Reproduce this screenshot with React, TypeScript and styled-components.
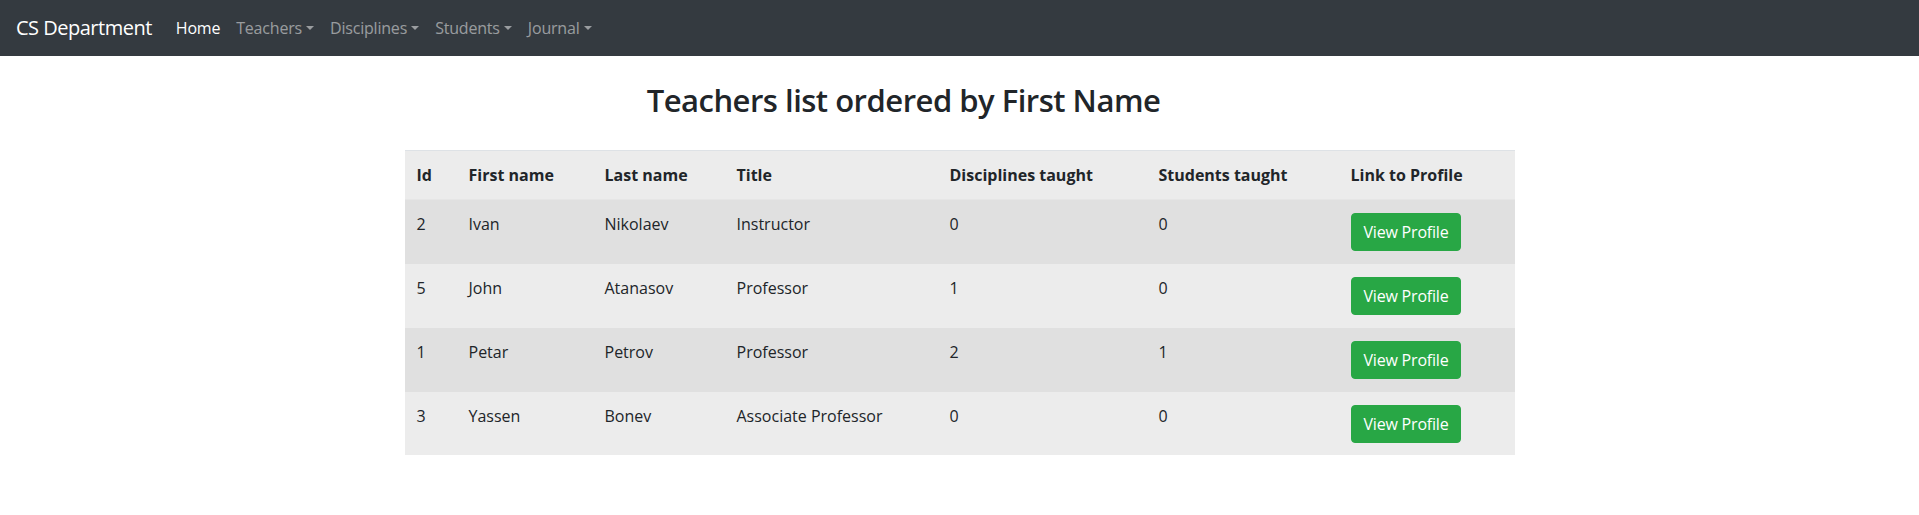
import * as React from 'react';
import styled, { createGlobalStyle } from 'styled-components';

const GlobalStyle = createGlobalStyle`
  body {
    margin: 0;
    background: #fff;
    color: #212529;
    font-family: 'Open Sans', 'Noto Sans', sans-serif;
    font-size: 16px;
    line-height: 1.5;
  }
`;

const Navbar = styled.nav`
  display: flex;
  align-items: center;
  height: 56px;
  box-sizing: border-box;
  padding: 8px 16px;
  background-color: #343a40;
`;

const Brand = styled.a`
  font-size: 20px;
  line-height: 30px;
  letter-spacing: -0.5px;
  padding: 5px 0;
  margin-right: 16px;
  color: #fff;
  white-space: nowrap;
`;

const NavList = styled.div`
  display: flex;
  align-items: center;
`;

const NavLink = styled.a<{ $active?: boolean }>`
  padding: 8px;
  line-height: 24px;
  letter-spacing: -0.2px;
  color: ${(p) => (p.$active ? '#fff' : 'rgba(255, 255, 255, 0.5)')};
  white-space: nowrap;
`;

const Caret = styled.span`
  display: inline-block;
  margin-left: 0.255em;
  vertical-align: 0.255em;
  border-top: 0.3em solid;
  border-right: 0.3em solid transparent;
  border-left: 0.3em solid transparent;
`;

const Container = styled.main`
  width: 1110px;
  margin: 0 auto;
`;

const Title = styled.h1`
  margin: 26px 0 31px;
  padding-right: 112px;
  font-size: 31px;
  font-weight: 600;
  line-height: 1.2;
  letter-spacing: -0.5px;
  text-align: center;
`;

const Table = styled.table`
  width: 100%;
  border-collapse: collapse;
  table-layout: fixed;
`;

const HeadRow = styled.tr`
  background-color: #ececec;
`;

const Th = styled.th`
  padding: 12px;
  text-align: left;
  font-weight: 700;
  border-top: 1px solid #dee2e6;
  border-bottom: 1px solid #e6e6e6;
`;

const Row = styled.tr<{ $odd: boolean }>`
  background-color: ${(p) => (p.$odd ? '#e0e0e0' : '#ececec')};
`;

const Td = styled.td`
  padding: 12px;
  vertical-align: top;
  border-top: 1px solid transparent;
`;

const Button = styled.a`
  display: inline-block;
  padding: 6px 12px;
  margin-top: 1px;
  border: 1px solid #28a745;
  border-radius: 4px;
  background-color: #28a745;
  color: #fff;
  line-height: 24px;
  letter-spacing: -0.2px;
  white-space: nowrap;
  vertical-align: top;
`;

const columns = [
  { label: 'Id', width: 52 },
  { label: 'First name', width: 136 },
  { label: 'Last name', width: 132 },
  { label: 'Title', width: 213 },
  { label: 'Disciplines taught', width: 209 },
  { label: 'Students taught', width: 192 },
  { label: 'Link to Profile', width: 176 },
];

const teachers = [
  { id: 2, first: 'Ivan', last: 'Nikolaev', title: 'Instructor', disciplines: 0, students: 0 },
  { id: 5, first: 'John', last: 'Atanasov', title: 'Professor', disciplines: 1, students: 0 },
  { id: 1, first: 'Petar', last: 'Petrov', title: 'Professor', disciplines: 2, students: 1 },
  { id: 3, first: 'Yassen', last: 'Bonev', title: 'Associate Professor', disciplines: 0, students: 0 },
];

const App: React.FC = () => (
  <>
    <GlobalStyle />
    <Navbar>
      <Brand>CS Department</Brand>
      <NavList>
        <NavLink $active>Home</NavLink>
        <NavLink>Teachers<Caret /></NavLink>
        <NavLink>Disciplines<Caret /></NavLink>
        <NavLink>Students<Caret /></NavLink>
        <NavLink>Journal<Caret /></NavLink>
      </NavList>
    </Navbar>
    <Container>
      <Title>Teachers list ordered by First Name</Title>
      <Table>
        <colgroup>
          {columns.map((c) => (
            <col key={c.label} style={{ width: c.width }} />
          ))}
        </colgroup>
        <thead>
          <HeadRow>
            {columns.map((c) => (
              <Th key={c.label}>{c.label}</Th>
            ))}
          </HeadRow>
        </thead>
        <tbody>
          {teachers.map((t, i) => (
            <Row key={t.id} $odd={i % 2 === 0}>
              <Td>{t.id}</Td>
              <Td>{t.first}</Td>
              <Td>{t.last}</Td>
              <Td>{t.title}</Td>
              <Td>{t.disciplines}</Td>
              <Td>{t.students}</Td>
              <Td>
                <Button>View Profile</Button>
              </Td>
            </Row>
          ))}
        </tbody>
      </Table>
    </Container>
  </>
);

export default App;
